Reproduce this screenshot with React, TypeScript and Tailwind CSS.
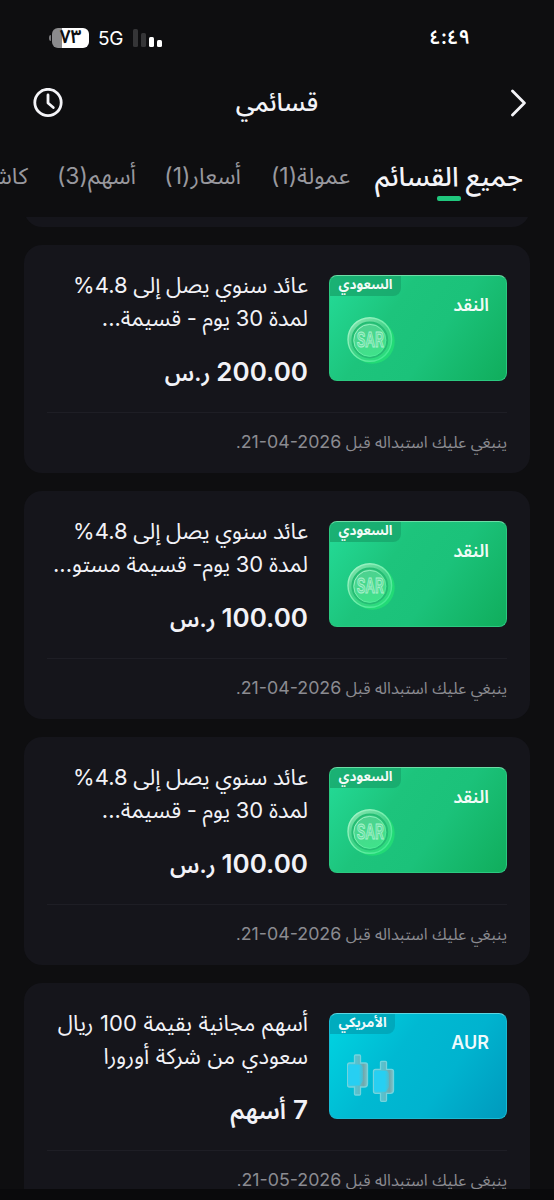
import { useId } from 'react';

type Market = 'saudi' | 'us';

interface Coupon {
  id: number;
  market: Market;
  label: string;
  title: [string, string];
  truncated?: boolean;
  amount: string;
  unit: string;
  expiry: string;
}

const COUPONS: Coupon[] = [
  {
    id: 1,
    market: 'saudi',
    label: 'النقد',
    title: ['عائد سنوي يصل إلى 4.8%', 'لمدة 30 يوم - قسيمة'],
    truncated: true,
    amount: '200.00',
    unit: 'ر.س',
    expiry: '21-04-2026',
  },
  {
    id: 2,
    market: 'saudi',
    label: 'النقد',
    title: ['عائد سنوي يصل إلى 4.8%', 'لمدة 30 يوم- قسيمة مستو'],
    truncated: true,
    amount: '100.00',
    unit: 'ر.س',
    expiry: '21-04-2026',
  },
  {
    id: 3,
    market: 'saudi',
    label: 'النقد',
    title: ['عائد سنوي يصل إلى 4.8%', 'لمدة 30 يوم - قسيمة'],
    truncated: true,
    amount: '100.00',
    unit: 'ر.س',
    expiry: '21-04-2026',
  },
  {
    id: 4,
    market: 'us',
    label: 'AUR',
    title: ['أسهم مجانية بقيمة 100 ريال', 'سعودي من شركة أورورا'],
    amount: '7',
    unit: 'أسهم',
    expiry: '21-05-2026',
  },
];

const TABS = [
  { name: 'عمولة(1)', width: 'w-[80px]' },
  { name: 'أسعار(1)', width: 'w-[76px]' },
  { name: 'أسهم(3)', width: 'w-[79px]' },
  { name: 'كاش', width: 'w-[40px]' },
];

function StatusBar() {
  return (
    <div dir="ltr" className="flex h-[75px] items-center pl-[49px] pr-[84px]">
      <span className="h-[6px] w-[2px] rounded-l-full bg-[#77777a]" />
      <span className="ml-px flex h-5 w-[37px] items-center justify-center rounded-[6px] bg-linear-to-r from-[#8b8b8d] from-[27%] to-white to-[27%] pb-[2px] text-[19px] font-semibold leading-none text-[#0e0e10]">
        ٧٣
      </span>
      <span className="ml-[9px] mt-[2px] w-[26px] text-[19px] leading-5 tracking-[-0.3px] text-white">5G</span>
      <span className="ml-[9px] flex h-[18px] items-end gap-[3px]">
        <i className="h-[18px] w-[5px] rounded-[1.5px] bg-[#353537]" />
        <i className="h-[14px] w-[5px] rounded-[1.5px] bg-[#353537]" />
        <i className="h-[10px] w-[5px] rounded-[1.5px] bg-white" />
        <i className="h-[7px] w-[5px] rounded-[1.5px] bg-white" />
      </span>
      <span className="-mt-[2px] ml-auto text-[20px] font-semibold leading-6 text-white">٤:٤٩</span>
    </div>
  );
}

function Header() {
  return (
    <header className="flex h-[56px] items-center justify-between pl-[33px] pr-[28px]">
      <div className="w-[35px]">
        <svg width="15" height="28" viewBox="0 0 15 28" fill="none" stroke="#f4f4f8" strokeWidth="2.8">
          <path d="M1.5 2 13.4 14 1.5 26" strokeLinecap="round" strokeLinejoin="round" />
        </svg>
      </div>
      <h1 className="-mt-[2px] text-[25px] font-medium leading-8 text-[#f4f4f8]">قسائمي</h1>
      <svg width="30" height="30" viewBox="0 0 30 30" fill="none" stroke="#f4f4f8" strokeWidth="2.8">
        <circle cx="15" cy="14.5" r="13.2" />
        <path d="M15 7V15L20.3 19.5" strokeLinecap="round" strokeLinejoin="round" />
      </svg>
    </header>
  );
}

function Tabs() {
  return (
    <nav className="flex h-[86px] overflow-hidden pr-[30px] pt-[26px]">
      <div className="flex w-[150px] shrink-0 flex-col items-center">
        <span className="whitespace-nowrap text-[27px] font-medium leading-[39px] text-[#f4f4f8]">جميع القسائم</span>
        <span className="h-[5px] w-6 rounded-[2px] bg-[#20c77d]" />
      </div>
      <div className="mr-[24px] flex gap-[29px]">
        {TABS.map((tab) => (
          <span key={tab.name} className={`shrink-0 whitespace-nowrap text-[23px] leading-[39px] text-[#98989e] ${tab.width}`}>
            {tab.name}
          </span>
        ))}
      </div>
    </nav>
  );
}

function SarCoin() {
  const id = useId();

  return (
    <svg width="50" height="50" viewBox="0 0 50 50">
      <defs>
        <linearGradient id={`${id}rim`} x1="0.2" y1="0" x2="0.8" y2="1">
          <stop offset="0" stopColor="#86e6b0" />
          <stop offset="0.45" stopColor="#42d28a" />
          <stop offset="1" stopColor="#27dd7a" />
        </linearGradient>
        <linearGradient id={`${id}edge`} x1="0" y1="0" x2="1" y2="1">
          <stop offset="0" stopColor="#aef3cd" />
          <stop offset="1" stopColor="#35e88a" />
        </linearGradient>
        <linearGradient id={`${id}face`} x1="0.3" y1="0" x2="0.6" y2="1">
          <stop offset="0" stopColor="#4fcf90" />
          <stop offset="1" stopColor="#3fe38a" />
        </linearGradient>
      </defs>
      <circle cx="25.5" cy="25.5" r="22.2" fill="#22da76" />
      <circle cx="22.8" cy="23.5" r="21.8" fill={`url(#${id}rim)`} stroke={`url(#${id}edge)`} strokeWidth="1.4" />
      <circle cx="22.8" cy="24" r="17.4" fill={`url(#${id}face)`} stroke="#25bd74" strokeWidth="2" />
      <circle cx="22.8" cy="24.4" r="16" fill="none" stroke={`url(#${id}edge)`} strokeWidth="1" />
      <text
        x="23.2"
        y="31"
        textAnchor="middle"
        textLength="27"
        lengthAdjust="spacingAndGlyphs"
        fontFamily="Inter, sans-serif"
        fontSize="20"
        fontWeight="600"
        fill="#5fdc9e"
        stroke="#a8f2cb"
        strokeWidth="1"
      >
        SAR
      </text>
    </svg>
  );
}

function Candles() {
  const id = useId();
  const candle = 'M9 1h4q1 0 1 1v7h5q2 0 2 2v19q0 3-3 3h-4v7q0 1-1 1H9q-1 0-1-1v-7H3q-2 0-2-2V11q0-2 2-2h5V2q0-1 1-1z';

  return (
    <svg width="50" height="50" viewBox="0 0 50 50">
      <defs>
        <linearGradient id={`${id}glass`} x1="0" y1="0" x2="1" y2="0">
          <stop offset="0" stopColor="#35cfe8" />
          <stop offset="0.5" stopColor="#5bbfcb" />
          <stop offset="0.8" stopColor="#6fa9ae" />
          <stop offset="1" stopColor="#7cc4c9" />
        </linearGradient>
        <linearGradient id={`${id}core`} x1="0" y1="0" x2="1" y2="0">
          <stop offset="0.7" stopColor="#27cff2" />
          <stop offset="1" stopColor="#27cff2" stopOpacity="0.35" />
        </linearGradient>
      </defs>
      {['translate(-0.5 0)', 'translate(25.5 6.3)'].map((t) => (
        <g key={t} transform={t}>
          <path d={candle} fill={`url(#${id}glass)`} stroke="#74d3dd" strokeWidth="1.3" />
          <path d="M3.5 10.5h11l2 3v13l-3 5h-10l-2-2V12z" fill={`url(#${id}core)`} />
        </g>
      ))}
    </svg>
  );
}

function Voucher({ market, label }: Pick<Coupon, 'market' | 'label'>) {
  const saudi = market === 'saudi';

  return (
    <div
      className={`relative h-[106px] w-[178px] shrink-0 overflow-hidden rounded-lg border ${
        saudi
          ? 'border-[#2bc980] border-t-[#6ddda6] bg-linear-[125deg,#24dc98_0%,#1dc47c_35%,#1bc27a_60%,#10ad5c_100%]'
          : 'border-[#18bad3] border-t-[#5cd6e2] bg-linear-[125deg,#00d5e2_0%,#00b9d2_38%,#00b3cf_65%,#009abd_100%]'
      }`}
    >
      <span
        className={`absolute left-0 top-0 flex h-5 items-center justify-center rounded-br-lg pb-[2px] text-[13.5px] font-bold leading-none text-white/95 ${
          saudi ? 'w-[71px] bg-[#18a66c]/80' : 'w-[65px] bg-[#00a3b5]/80'
        }`}
      >
        {saudi ? 'السعودي' : 'الأمريكي'}
      </span>
      <span className="absolute right-[17px] top-[17px] text-[18px] font-semibold leading-6 text-white/95">{label}</span>
      <span className="absolute left-[17px] top-[40px]">{saudi ? <SarCoin /> : <Candles />}</span>
    </div>
  );
}

function CouponCard({ coupon }: { coupon: Coupon }) {
  const isCash = coupon.market === 'saudi';

  return (
    <article className="h-[228px] shrink-0 rounded-[18px] bg-[#15151b] pl-[23px] pr-[23px] pt-[30px]">
      <div className="flex h-[138px] gap-[21px] border-b border-[#1e1e25]">
        <Voucher market={coupon.market} label={coupon.label} />
        <div
          className={`-mt-[6px] whitespace-nowrap text-[22px] leading-[33px] text-[#f2f2f7] ${
            isCash ? '[word-spacing:-0.5px]' : '[word-spacing:0.5px]'
          }`}
        >
          <p>{coupon.title[0]}</p>
          <p>
            {coupon.title[1]}
            {coupon.truncated && <span className="tracking-[-0.8px]">...</span>}
          </p>
          <p className="mt-[19px] text-[26px] font-semibold leading-9">
            {coupon.amount} <span className={isCash ? 'text-[22.5px]' : 'text-[24px]'}>{coupon.unit}</span>
          </p>
        </div>
      </div>
      <p className="mt-[15px] whitespace-nowrap text-[16.2px] leading-7 text-[#8b8b91]">
        ينبغي عليك استبداله قبل{' '}
        <bdi dir="ltr" className="text-[17.8px]">
          {coupon.expiry}
        </bdi>
        .
      </p>
    </article>
  );
}

export default function App() {
  return (
    <div
      dir="rtl"
      className="flex h-[1200px] w-[554px] flex-col overflow-hidden bg-[#0e0e10] font-[Inter,'Noto_Sans_Arabic','DejaVu_Sans_Condensed','DejaVu_Sans',sans-serif]"
    >
      <StatusBar />
      <Header />
      <Tabs />
      <main className="flex h-[972px] shrink-0 flex-col gap-[18px] overflow-hidden px-[24px]">
        <div className="h-[10px] shrink-0 overflow-hidden">
          <div className="-mt-[30px] h-10 rounded-[18px] bg-[#15151b]" />
        </div>
        {COUPONS.map((coupon) => (
          <CouponCard key={coupon.id} coupon={coupon} />
        ))}
      </main>
      <div className="flex-1 bg-[#0a0a0c]" />
    </div>
  );
}
